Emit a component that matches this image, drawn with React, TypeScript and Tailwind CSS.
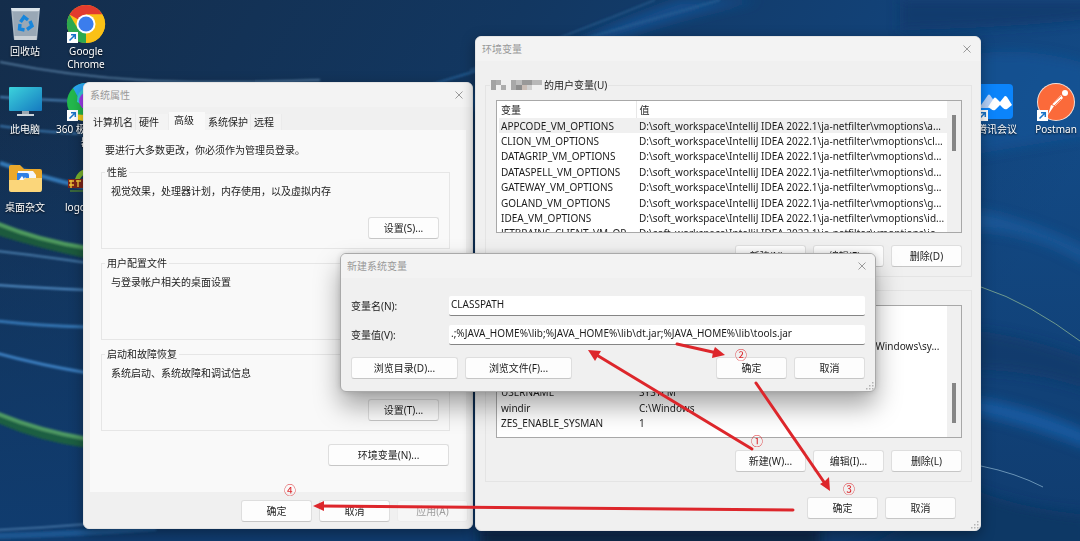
import type { ReactNode } from "react";

interface Variable {
  name: string;
  value: string;
}

const OPTIONS_DIR = "D:\\soft_workspace\\IntelliJ IDEA 2022.1\\ja-netfilter\\vmoptions\\";

const userVariables: Variable[] = [
  { name: "APPCODE_VM_OPTIONS", value: `${OPTIONS_DIR}a...` },
  { name: "CLION_VM_OPTIONS", value: `${OPTIONS_DIR}cl...` },
  { name: "DATAGRIP_VM_OPTIONS", value: `${OPTIONS_DIR}d...` },
  { name: "DATASPELL_VM_OPTIONS", value: `${OPTIONS_DIR}d...` },
  { name: "GATEWAY_VM_OPTIONS", value: `${OPTIONS_DIR}g...` },
  { name: "GOLAND_VM_OPTIONS", value: `${OPTIONS_DIR}g...` },
  { name: "IDEA_VM_OPTIONS", value: `${OPTIONS_DIR}id...` },
  { name: "JETBRAINS_CLIENT_VM_OP...", value: `${OPTIONS_DIR}je...` },
];

const systemVariables: Variable[] = [
  { name: "PROCESSOR_REVISION", value: "9a03" },
  { name: "PSModulePath", value: "%ProgramFiles%\\WindowsPowerShell\\Modules;C:\\Windows\\sy..." },
  { name: "TEMP", value: "C:\\Windows\\TEMP" },
  { name: "TMP", value: "C:\\Windows\\TEMP" },
  { name: "USERNAME", value: "SYSTEM" },
  { name: "windir", value: "C:\\Windows" },
  { name: "ZES_ENABLE_SYSMAN", value: "1" },
];

/* ---------- Shared controls ---------- */

function PushButton({
  children,
  className = "w-[71px]",
  disabled,
}: {
  children: ReactNode;
  className?: string;
  disabled?: boolean;
}) {
  return (
    <button
      type="button"
      disabled={disabled}
      className={`h-[22px] shrink-0 rounded-[3px] border border-[#dedede] border-b-[#c6c6c6] bg-[#fdfdfd] text-center leading-4 whitespace-nowrap disabled:border-[#ececec] disabled:bg-[#f6f6f6] disabled:text-[#9d9d9d] ${className}`}
    >
      {children}
    </button>
  );
}

function Window({
  title,
  className,
  children,
}: {
  title: string;
  className: string;
  children: ReactNode;
}) {
  return (
    <section
      aria-label={title}
      className={`absolute flex flex-col overflow-hidden rounded-[6px] border bg-[#f0f0f0] ${className}`}
    >
      <header className="flex h-6 items-center justify-between bg-[#f3f3f3] pr-2 pb-px pl-[6px] text-[#999]">
        <h2>{title}</h2>
        <button type="button" aria-label="关闭" className="p-px">
          <svg width="8" height="8" viewBox="0 0 8 8" stroke="#9a9a9a" strokeWidth="1">
            <path d="M0.5 0.5 7.5 7.5M7.5 0.5 0.5 7.5" />
          </svg>
        </button>
      </header>
      {children}
    </section>
  );
}

function SizeGrip() {
  return (
    <svg className="absolute right-px bottom-px" width="8" height="8" viewBox="0 0 8 8" fill="#b4b4b4">
      <path d="M6 0h1.5v1.5H6zM6 3h1.5v1.5H6zM6 6h1.5v1.5H6zM3 3h1.5v1.5H3zM3 6h1.5v1.5H3zM0 6h1.5v1.5H0z" />
    </svg>
  );
}

/* ---------- System properties ---------- */

function PropertyGroup({ title, text, action }: { title: string; text: string; action?: string }) {
  return (
    <fieldset className="mt-[7px] mr-4 ml-[11px] h-[84px] border border-[#e6e6e6]">
      <legend className="ml-[3px] px-[2px] leading-[14px]">{title}</legend>
      <p className="pt-1 pl-[9px] leading-4">{text}</p>
      {action && (
        <div className="mt-[18px] mr-[10px] flex justify-end">
          <PushButton>{action}</PushButton>
        </div>
      )}
    </fieldset>
  );
}

function SystemProperties() {
  const tab = "h-4 pl-[3px] text-left leading-4 whitespace-nowrap bg-[#f3f3f3] border-r border-[#ebebeb]";
  return (
    <Window title="系统属性" className="top-[82px] left-[83px] w-[390px] border-[#e4e4e4] shadow-[0_4px_14px_rgba(0,0,0,0.35)]">
      <div role="tablist" className="flex h-[23px] items-end px-[6px]">
        <button type="button" role="tab" className={`${tab} w-[46px]`}>计算机名</button>
        <button type="button" role="tab" className={`${tab} w-[33px]`}>硬件</button>
        <button
          type="button"
          role="tab"
          aria-selected="true"
          className="h-[18px] w-[36px] bg-[#f9f9f9] pb-[2px] pl-[5px] text-left leading-4 whitespace-nowrap"
        >
          高级
        </button>
        <button type="button" role="tab" className={`${tab} w-[46px]`}>系统保护</button>
        <button type="button" role="tab" className={`${tab} w-[31px]`}>远程</button>
      </div>

      <div className="mx-[6px] bg-[#f9f9f9] pt-3 pb-[26px]">
        <p className="pl-[15px] leading-4">要进行大多数更改，你必须作为管理员登录。</p>
        <PropertyGroup title="性能" text="视觉效果，处理器计划，内存使用，以及虚拟内存" action="设置(S)..." />
        <PropertyGroup title="用户配置文件" text="与登录帐户相关的桌面设置" />
        <PropertyGroup title="启动和故障恢复" text="系统启动、系统故障和调试信息" action="设置(T)..." />
        <div className="mt-[13px] mr-[17px] flex justify-end">
          <PushButton className="w-[121px]">环境变量(N)...</PushButton>
        </div>
      </div>

      <footer className="flex justify-end gap-[7px] pt-2 pr-1 pb-[6px]">
        <PushButton>确定</PushButton>
        <PushButton>取消</PushButton>
        <PushButton disabled>应用(A)</PushButton>
      </footer>
    </Window>
  );
}

/* ---------- Environment variables ---------- */

function VariableList({
  rows,
  tableClass,
  thumbClass,
  selected,
}: {
  rows: Variable[];
  tableClass: string;
  thumbClass: string;
  selected?: string;
}) {
  return (
    <div className="mt-2 mr-[9px] ml-[10px] flex h-[133px] overflow-hidden border border-[#a8a8a8] bg-white">
      <div className="min-w-0 flex-1 overflow-hidden pl-[2px]">
        <table className={`w-full table-fixed border-collapse leading-[14px] ${tableClass}`}>
          <thead>
            <tr className="text-left">
              <th className="h-[17px] w-[137px] border-r border-[#e8e8e8] p-0 pl-[2px] font-normal">变量</th>
              <th className="h-[17px] p-0 pl-[3px] font-normal">值</th>
            </tr>
          </thead>
          <tbody>
            {rows.map((row) => (
              <tr key={row.name} className={row.name === selected ? "bg-[#f0f0f0]" : ""}>
                <td className="overflow-hidden p-0 pl-[2px] whitespace-nowrap">{row.name}</td>
                <td className="p-0 pl-[3px] whitespace-nowrap">{row.value}</td>
              </tr>
            ))}
          </tbody>
        </table>
      </div>
      <div className="w-[14px] bg-[#f0f0f0] pl-[5px]">
        <div className={`w-1 bg-[#868686] ${thumbClass}`} />
      </div>
    </div>
  );
}

function MaskedUser() {
  return (
    <svg className="inline-block align-[-1px]" width="51" height="10" viewBox="0 0 51 10">
      <path fill="#a3a3a3" d="M0 0h5v10H0z" />
      <path fill="#adadad" d="M5 0h5v5H5zM10 5h5v5h-5z" />
      <path fill="#a8a8a8" d="M20 0h5v10h-5z" />
      <path fill="#bdbdbd" d="M25 0h6v5h-6z" />
      <path fill="#8d8d8d" d="M25 5h6v5h-6z" />
      <path fill="#999" d="M31 0h5v5h-5zM36 0h5v5h-5z" />
      <path fill="#c9bdb6" d="M31 5h5v5h-5z" />
      <path fill="#b8b8b8" d="M41 0h10v5H41z" />
      <path fill="#d0d0d0" d="M36 5h5v5h-5z" />
    </svg>
  );
}

function VariableGroup({ legend, list, actions }: { legend: ReactNode; list: ReactNode; actions: string[] }) {
  return (
    <fieldset className="mr-2 mb-[6px] ml-[9px] min-w-0 border border-[#e4e4e4] pb-[9px]">
      <legend className="ml-1 px-px leading-[14px]">{legend}</legend>
      {list}
      <div className="mt-3 mr-[9px] flex justify-end gap-[7px]">
        {actions.map((action) => (
          <PushButton key={action}>{action}</PushButton>
        ))}
      </div>
    </fieldset>
  );
}

function EnvironmentVariables() {
  return (
    <Window title="环境变量" className="top-[36px] left-[475px] w-[506px] border-[#e4e4e4] shadow-[0_4px_14px_rgba(0,0,0,0.35)]">
      <div className="pt-[17px]">
        <VariableGroup
          legend={
            <span className="flex items-center gap-[2px]">
              <MaskedUser />
              的用户变量(U)
            </span>
          }
          list={
            <VariableList
              rows={userVariables}
              tableClass="h-[140px]"
              thumbClass="mt-[14px] h-[36px]"
              selected="APPCODE_VM_OPTIONS"
            />
          }
          actions={["新建(N)...", "编辑(E)...", "删除(D)"]}
        />
        <VariableGroup
          legend="系统变量(S)"
          list={<VariableList rows={systemVariables} tableClass="h-[125px]" thumbClass="mt-[77px] h-10" />}
          actions={["新建(W)...", "编辑(I)...", "删除(L)"]}
        />
      </div>
      <footer className="flex justify-end gap-[7px] pt-[9px] pr-6 pb-[11px]">
        <PushButton>确定</PushButton>
        <PushButton>取消</PushButton>
      </footer>
      <SizeGrip />
    </Window>
  );
}

/* ---------- New system variable ---------- */

function TextField({ id, label, value }: { id: string; label: string; value: string }) {
  return (
    <div className="flex items-center">
      <label htmlFor={id} className="w-[98px]">{label}</label>
      <input
        id={id}
        type="text"
        defaultValue={value}
        className="h-5 min-w-0 flex-1 rounded-[2px] border-b border-[#858585] bg-white px-[2px] pb-[3px] outline-none"
      />
    </div>
  );
}

function NewVariableDialog() {
  return (
    <Window
      title="新建系统变量"
      className="top-[253px] left-[340px] w-[536px] border-[#a9a9a9] shadow-[0_14px_26px_rgba(0,0,0,0.35),0_0_6px_rgba(0,0,0,0.15)]"
    >
      <form className="flex flex-col gap-[9px] px-[10px] pt-[18px] pb-3">
        <TextField id="variable-name" label="变量名(N):" value="CLASSPATH" />
        <TextField
          id="variable-value"
          label="变量值(V):"
          value=".;%JAVA_HOME%\lib;%JAVA_HOME%\lib\dt.jar;%JAVA_HOME%\lib\tools.jar"
        />
        <div className="flex gap-[7px] pt-[3px]">
          <PushButton className="w-[107px]">浏览目录(D)...</PushButton>
          <PushButton className="w-[107px]">浏览文件(F)...</PushButton>
          <span className="flex-1" />
          <PushButton>确定</PushButton>
          <PushButton>取消</PushButton>
        </div>
      </form>
      <SizeGrip />
    </Window>
  );
}

/* ---------- Desktop ---------- */

function ShortcutArrow() {
  return (
    <g>
      <path fill="#fff" d="M0 28h11v11H0z" />
      <path d="M2.5 36.5 8 31M4 30.7h4.3V35" fill="none" stroke="#1a74c8" strokeWidth="1.5" />
    </g>
  );
}

function RecycleBinIcon() {
  return (
    <svg width="40" height="40" viewBox="0 0 40 40">
      <path d="M6 4h29l-3 32H9z" fill="#aab7c3" />
      <path d="M6 4h29l-1 3H7z" fill="#dbe4ea" />
      <path d="M8 8h25l-2 25H10z" fill="#8e9eae" opacity="0.6" />
      <path d="M9 32h23l-1 4H10z" fill="#c9d0d6" />
      <g fill="none" stroke="#1786dc" strokeWidth="3.4">
        <path d="m15.500 18 3.500-5 4 3" />
        <path d="m25 17 2 5-5 3.500" />
        <path d="m19.500 26-5-1 0.500-5" />
      </g>
    </svg>
  );
}

function ChromeIcon() {
  return (
    <svg width="40" height="40" viewBox="0 0 40 40">
      <circle cx="20" cy="20" r="19" fill="#fbc116" />
      <path d="M20 20 3.500 10.500A19 19 0 0 1 36.500 10.500H20z" fill="#e33b2e" />
      <path d="M3.500 10.500A19 19 0 0 0 20 39l8.200-14.200L20 20 11.800 24.800z" fill="#2da94f" />
      <path d="M36.500 10.500H20v19L20 39a19 19 0 0 0 16.500-28.500z" fill="#fbc116" />
      <circle cx="20" cy="20" r="9.500" fill="#fff" />
      <circle cx="20" cy="20" r="7.600" fill="#3b7ded" />
      <g transform="translate(1)"><ShortcutArrow /></g>
    </svg>
  );
}

function ComputerIcon() {
  return (
    <svg width="40" height="40" viewBox="0 0 40 40">
      <defs>
        <linearGradient id="screen" x1="0" y1="0" x2="1" y2="1">
          <stop offset="0" stopColor="#3cd3dc" />
          <stop offset="1" stopColor="#1579c0" />
        </linearGradient>
      </defs>
      <rect x="4" y="5" width="33" height="24" rx="1" fill="url(#screen)" />
      <path d="M17 29h7v3h-7z" fill="#9aa6b0" />
      <path d="M12 32h17v2H12z" fill="#ccd4da" />
    </svg>
  );
}

function BrowserIcon() {
  return (
    <svg width="40" height="40" viewBox="0 0 40 40">
      <circle cx="20" cy="20" r="19" fill="#23b94d" />
      <path d="M20 1A19 19 0 0 0 7 6l5 9 8-6z" fill="#2aa5f2" />
      <path d="M20 5a15 15 0 0 0-9 15l9 4z" fill="#35c9d8" />
      <path d="M4 32a19 19 0 0 0 16 7v-6z" fill="#f5cf1c" />
      <circle cx="22" cy="19" r="9" fill="#a13df0" />
      <circle cx="22" cy="19" r="5" fill="#fff" />
      <g transform="translate(1)"><ShortcutArrow /></g>
    </svg>
  );
}

function FolderIcon() {
  return (
    <svg width="40" height="40" viewBox="0 0 40 40">
      <path d="M4 7q0-2 2-2h9l4 4h16q2 0 2 2v18H4z" fill="#eba92c" />
      <path d="M13 11h15l3 4v8H13z" fill="#f4f7fa" />
      <path d="M12 13h10q2 0 2 2v7H12z" fill="#2d7fe6" />
      <path d="m14 20 3-4 2 3 1-2 2 3z" fill="#fff" />
      <path d="M4 20h14l3-2h16v11q0 3-2 3H6q-2 0-2-2z" fill="#fbd67a" />
    </svg>
  );
}

function LogoFileIcon() {
  return (
    <svg width="40" height="40" viewBox="0 0 40 40">
      <path d="M9 19q3-9 11-10v5q-4 1-6 5z" fill="#7ab32c" />
      <path d="M2 19h32v9H2z" fill="#7d2418" />
      <path d="M3 21h5M3 25h5M5 20v8M10 21h5M12 20v7M18 21h5M20 20v8" stroke="#f0c53a" strokeWidth="1.4" />
      <path d="M4 31h26" stroke="#477a35" strokeWidth="1.500" />
    </svg>
  );
}

function MeetingIcon() {
  return (
    <svg width="40" height="40" viewBox="0 0 40 40">
      <rect x="0" y="2" width="36" height="35" rx="4" fill="#0b84fb" />
      <path d="m2 26 9-13q1-1 2 0l7 10-3 3z" fill="#b7d2fa" />
      <path d="m11 25 6-9q1-1 2 0l4 4 4-5q1-2 3 0l5 8-5 4q-2 1-4-1l-3-3-5 5q-2 1-4-1z" fill="#fff" />
      <ShortcutArrow />
    </svg>
  );
}

function PostmanIcon() {
  return (
    <svg width="40" height="40" viewBox="0 0 40 40">
      <circle cx="20" cy="20" r="19" fill="#f7dfd5" />
      <circle cx="20" cy="20" r="18" fill="#fb6a3a" />
      <circle cx="29" cy="11" r="3" fill="#fff" />
      <path d="m25 13 2 3-8 8-3-2z" fill="#fff" />
      <path d="m15 23 3 1-6 9z" fill="#fff" />
      <path d="m16 22 9-8M18 24l7-7" stroke="#fb6a3a" strokeWidth="0.800" />
      <g transform="translate(1)"><ShortcutArrow /></g>
    </svg>
  );
}

function DesktopItem({ icon, label }: { icon: ReactNode; label: string }) {
  return (
    <a
      href="#"
      className="flex h-[78px] flex-col items-center gap-px text-center leading-[13px] whitespace-pre text-white [text-shadow:0_1px_2px_rgba(0,0,0,0.9)]"
    >
      {icon}
      {label}
    </a>
  );
}

function Wallpaper() {
  return (
    <svg className="absolute inset-0 h-full w-full" viewBox="0 0 1080 541" preserveAspectRatio="none" fill="none">
      <defs>
        <linearGradient id="sky" x1="0" y1="0" x2="1" y2="0.300">
          <stop offset="0" stopColor="#142d4b" />
          <stop offset="0.450" stopColor="#123761" />
          <stop offset="0.800" stopColor="#12437a" />
          <stop offset="1" stopColor="#134b87" />
        </linearGradient>
        <linearGradient id="deep" x1="0" y1="0" x2="0" y2="1">
          <stop offset="0" stopColor="#103c6f" stopOpacity="0" />
          <stop offset="1" stopColor="#103c6f" />
        </linearGradient>
        <filter id="soft" x="-20%" y="-20%" width="140%" height="140%">
          <feGaussianBlur stdDeviation="6" />
        </filter>
        <filter id="glow" x="-20%" y="-20%" width="140%" height="140%">
          <feGaussianBlur stdDeviation="1" />
        </filter>
      </defs>
      <path fill="url(#sky)" d="M0 0h1080v541H0z" />
      <path fill="url(#deep)" d="M0 100h1080v441H0z" />
      <path d="M480 529h340v20H480z" fill="#0f2646" filter="url(#soft)" />
      {/* right-hand light bands */}
      <g filter="url(#soft)">
        <path d="M900 0h200v18q-90 10-200 12z" fill="#10396a" opacity="0.700" />
        <path d="M970 55q60-10 120 10v70l-120 20z" fill="#1959a0" opacity="0.500" />
        <path d="M975 210q50 8 115 40v16q-60-36-115-36z" fill="#2062a8" opacity="0.600" />
        <path d="M975 330q60 8 115 30v30q-60-20-115-20z" fill="#0f3866" opacity="0.600" />
        <path d="M975 398q60 10 115 35v16q-60-24-115-36z" fill="#1d62ac" opacity="0.800" />
        <path d="M975 490q50 20 115 25v40H850z" fill="#0f3765" />
      </g>
      {/* streaks above the windows */}
      <path d="M430 120Q560 40 680 0h80Q600 30 470 110z" fill="#15508e" filter="url(#soft)" />
      <g filter="url(#glow)">
        <path d="M470 70Q570 35 655 0" stroke="#356b9e" />
        <path d="M430 85Q560 45 720 0" stroke="#245b91" strokeWidth="2" />
        <path d="M0 62Q70 76 140 80T320 80" stroke="#5e86ab" strokeWidth="1.500" />
        <path d="M0 97q40 3 84 4" stroke="#4a82b6" strokeWidth="2" />
        <path d="M0 126q40 6 84 8" stroke="#3a74ab" strokeWidth="2" />
        <path d="M0 163q40 14 84 24" stroke="#3679b8" strokeWidth="4" />
      </g>
      {/* ribbons left of the windows */}
      <g filter="url(#glow)">
        <path d="M-4 230q44 14 92 24" stroke="#1d5a3d" strokeWidth="9" />
        <path d="M-4 223q44 18 92 25" stroke="#4f9b5f" strokeWidth="4" />
        <path d="M-4 251q44 5 92 12" stroke="#4c7fae" strokeWidth="2" />
        <path d="M-4 285q44 3 92 5" stroke="#5590c8" strokeWidth="2" />
        <path d="M-4 321q44 5 92 6" stroke="#3576b4" strokeWidth="3" />
        <path d="M-4 353q44 12 92 20" stroke="#3d80c2" strokeWidth="3" />
        <path d="M-4 418q44 20 92 26" stroke="#1f5f42" strokeWidth="8" />
        <path d="M-4 413q44 18 92 26" stroke="#4f9b63" strokeWidth="4" />
        <path d="M-4 530q44-2 92-6" stroke="#6a9ccb" strokeWidth="1" />
        <path d="M-4 536q80-2 160-8" stroke="#1b558f" strokeWidth="6" />
      </g>
      <path d="M981 287q25 8 50 22t49 32" stroke="#6f9a8f" />
      <path d="M981 466q35 7 62 21" stroke="#6993b6" />
    </svg>
  );
}

function Annotations() {
  return (
    <svg className="pointer-events-none absolute top-0 left-0" width="1080" height="541" viewBox="0 0 1080 541">
      <g stroke="#dd262b" strokeWidth="3" strokeLinecap="round">
        <path d="M752 449 595 354" />
        <path d="m677 344 40 9" />
        <path d="m756 383 70 102" />
        <path d="M793 510 321 506" />
      </g>
      <g fill="#dd262b">
        <path d="m588 350 13 1-3 5-3 5z" />
        <path d="m725 355-13 3 1-6 2-5z" />
        <path d="m830 491-10-7 5-3 4-4z" />
        <path d="m313 506 11-5v10z" />
      </g>
      <g fill="#dd262b" fontSize="12" textAnchor="middle">
        <text x="757" y="446">①</text>
        <text x="741" y="360">②</text>
        <text x="849" y="494">③</text>
        <text x="290" y="495">④</text>
      </g>
    </svg>
  );
}

export default function App() {
  return (
    <main className="relative min-h-screen overflow-hidden bg-[#12325a] font-['Noto_Sans','Noto_Sans_CJK_SC',sans-serif] text-[10px] leading-4 text-[#1c1c1c]">
      <Wallpaper />

      <nav aria-label="桌面" className="absolute inset-x-0 top-1 flex">
        <div className="w-[50px]">
          <DesktopItem icon={<RecycleBinIcon />} label="回收站" />
          <DesktopItem icon={<ComputerIcon />} label="此电脑" />
          <DesktopItem icon={<FolderIcon />} label="桌面杂文" />
        </div>
        <div className="w-[72px]">
          <DesktopItem icon={<ChromeIcon />} label={"Google\nChrome"} />
          <DesktopItem icon={<BrowserIcon />} label={"360 极速浏览\n器"} />
          <DesktopItem icon={<LogoFileIcon />} label="logo.png" />
        </div>
        <div className="ml-auto w-[70px] pt-[78px]">
          <DesktopItem icon={<MeetingIcon />} label="腾讯会议" />
        </div>
        <div className="w-12 pt-[78px]">
          <DesktopItem icon={<PostmanIcon />} label="Postman" />
        </div>
      </nav>

      <SystemProperties />
      <EnvironmentVariables />
      <NewVariableDialog />
      <Annotations />
    </main>
  );
}
